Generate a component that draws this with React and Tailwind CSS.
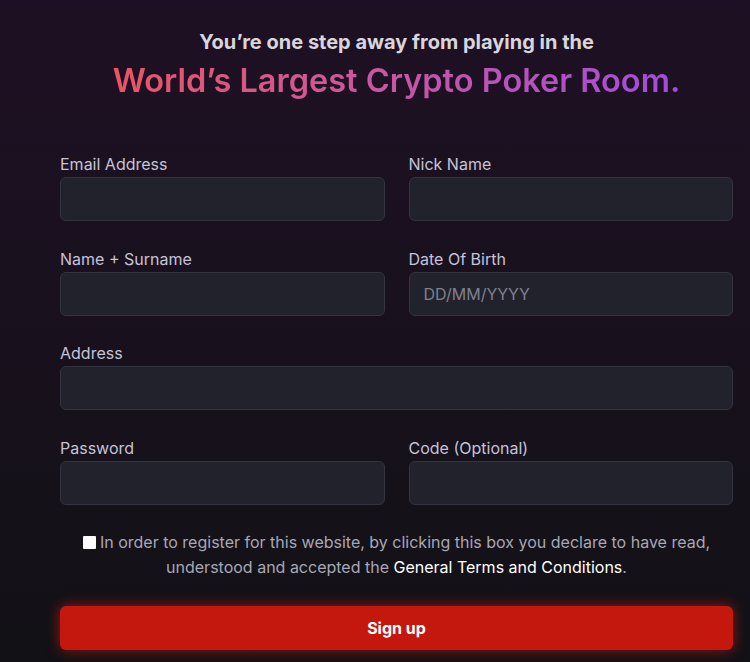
import React from "react";

function Field({ label, placeholder, full }) {
  return (
    <div className={full ? "col-span-2 flex flex-col" : "flex flex-col"}>
      <label className="text-[16px] leading-6 text-[#c5c3d9] mb-px">{label}</label>
      <input
        type="text"
        placeholder={placeholder}
        className="h-[44px] w-full rounded-md border border-[#33343f] bg-[#21222b] px-[14px] text-[16px] text-[#d0d0dc] placeholder:text-[#80808f] outline-none"
      />
    </div>
  );
}

export default function App() {
  return (
    <div
      className="min-h-screen w-full bg-gradient-to-b from-[#1e1024] to-[#121116] pt-[28px] pb-[12px]"
      style={{ fontFamily: "Inter, 'Noto Sans', sans-serif" }}
    >
      <div className="ml-[60px] w-[673px]">
        <h2 className="text-center text-[20px] leading-7 font-bold text-[#d9d5dd]">
          You’re one step away from playing in the
        </h2>
        <h1 className="mt-[5px] text-center text-[32.5px] leading-10 font-semibold">
          <span className="bg-gradient-to-r from-[#ea5464] to-[#a34ada] bg-clip-text text-transparent">
            World’s Largest Crypto Poker Room.
          </span>
        </h1>

        <form className="mt-[51px] grid grid-cols-2 gap-x-6 gap-y-[25.5px]">
          <Field label="Email Address" />
          <Field label="Nick Name" />
          <Field label="Name + Surname" />
          <Field label="Date Of Birth" placeholder="DD/MM/YYYY" />
          <Field label="Address" full />
          <Field label="Password" />
          <Field label="Code (Optional)" />
        </form>

        <p className="mt-[25px] text-center text-[16px] leading-[25px] text-[#a9a7b5]">
          <input type="checkbox" className="mr-[4px] h-[13px] w-[13px] align-[-1px] appearance-none bg-white rounded-[1px]" />
          In order to register for this website, by clicking this box you declare to have read,
          <br />
          understood and accepted the <span className="text-white">General Terms and Conditions</span>.
        </p>

        <button
          type="button"
          className="mt-[26px] h-[44px] w-full rounded-md bg-[#c4180f] text-[16px] font-bold text-white shadow-[0_0_14px_rgba(255,30,20,0.55)]"
        >
          Sign up
        </button>
      </div>
    </div>
  );
}
